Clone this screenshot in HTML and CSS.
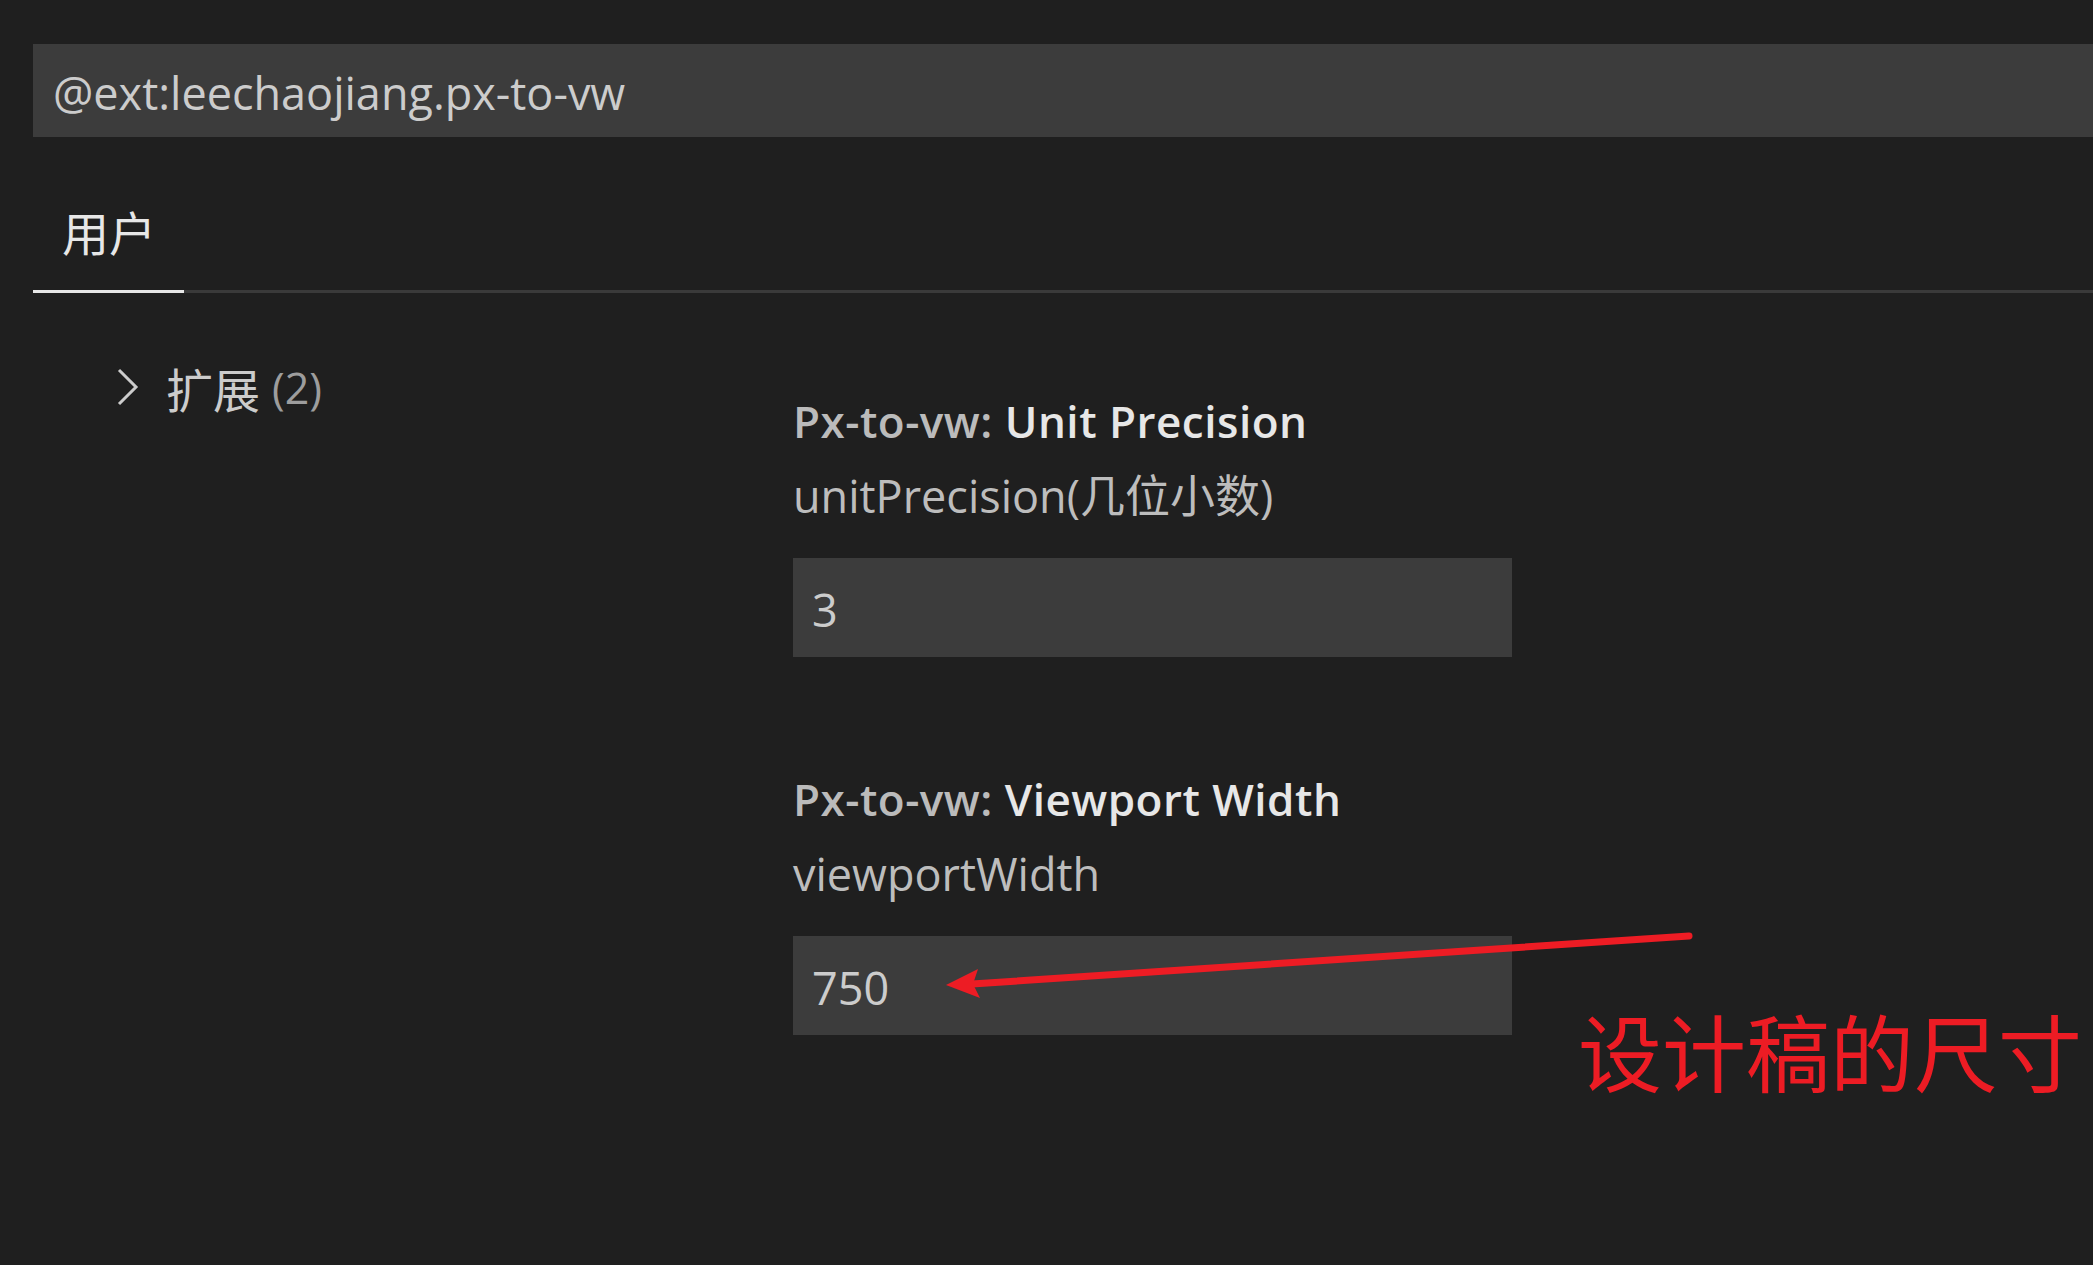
FILE: index.html
```html
<!DOCTYPE html>
<html lang="zh-CN">
<head>
<meta charset="utf-8">
<title>Settings</title>
<link rel="stylesheet" href="styles.css">
</head>
<body>
<div class="page">
  <div class="search">@ext:leechaojiang.px-to-vw</div>
  <div class="tabs">
    <div class="tab">用户</div>
  </div>
  <div class="content">
    <div class="toc">
      <div class="toc-item">
        <svg class="chev" width="22" height="38" viewBox="0 0 22 38"><polyline points="2,2 19,19 2,36" fill="none" stroke="#cccccc" stroke-width="3"/></svg>
        <span class="toc-label">扩展</span>
        <span class="toc-count">(2)</span>
      </div>
    </div>
    <div class="settings">
      <div class="setting">
        <div class="title"><span class="cat">Px-to-vw: </span><span class="name">Unit Precision</span></div>
        <div class="desc">unitPrecision(几位小数)</div>
        <div class="input">3</div>
      </div>
      <div class="setting">
        <div class="title"><span class="cat">Px-to-vw: </span><span class="name">Viewport Width</span></div>
        <div class="desc">viewportWidth</div>
        <div class="input">750</div>
      </div>
    </div>
  </div>
  <svg class="annot" width="2093" height="1265" viewBox="0 0 2093 1265">
    <line x1="972" y1="984" x2="1689" y2="936" stroke="#ed1c24" stroke-width="7" stroke-linecap="round"/>
    <polygon points="946,985 978,969 973,984 980,998" fill="#ed1c24"/>
  </svg>
  <div class="note">设计稿的尺寸</div>
</div>
</body>
</html>
```
FILE: styles.css
```css
html, body {
  margin: 0;
  padding: 0;
  background: #1f1f1f;
}
body {
  font-family: "Segoe UI", "Open Sans", "Noto Sans CJK SC", sans-serif;
  color: #cccccc;
  overflow: hidden;
}
.page {
  position: relative;
  width: 2093px;
  height: 1265px;
  padding-top: 44px;
  box-sizing: border-box;
}
.search {
  margin-left: 33px;
  height: 93px;
  box-sizing: border-box;
  background: #3c3c3c;
  padding: 5px 0 0 20px;
  font-size: 45px;
  line-height: 88px;
  color: #cccccc;
}
.tabs {
  margin-left: 33px;
  display: flex;
  border-bottom: 3px solid #3a3a3a;
}
.tab {
  width: 151px;
  box-sizing: border-box;
  padding: 64px 0 29px 29px;
  font-family: "Noto Sans CJK SC", sans-serif;
  font-size: 47px;
  line-height: 60px;
  color: #e7e7e7;
  border-bottom: 3px solid #e7e7e7;
  margin-bottom: -3px;
}
.content {
  display: grid;
  grid-template-columns: 760px 1fr;
  margin-left: 33px;
}
.toc {
  padding-top: 64px;
  padding-left: 84px;
}
.toc-item {
  display: flex;
  align-items: center;
  height: 60px;
}
.chev {
  margin-right: 27px;
}
.toc-label {
  font-family: "Noto Sans CJK SC", sans-serif;
  font-size: 47px;
  color: #cccccc;
  margin-right: 12px;
}
.toc-count {
  font-size: 43px;
  color: #9d9d9d;
}
.settings {
  padding-top: 98px;
  display: flex;
  flex-direction: column;
  gap: 112px;
}
.title {
  font-size: 44px;
  line-height: 60px;
  font-weight: 600;
  letter-spacing: 0.5px;
}
.cat {
  color: #bbbbbb;
}
.name {
  color: #e7e7e7;
}
.desc {
  margin-top: 15px;
  font-size: 45px;
  line-height: 60px;
  color: #bdbdbd;
}
.input {
  margin-top: 32px;
  width: 719px;
  height: 99px;
  box-sizing: border-box;
  background: #3c3c3c;
  padding: 5px 0 0 19px;
  font-size: 45px;
  line-height: 94px;
  color: #cccccc;
}
.annot {
  position: absolute;
  left: 0;
  top: 0;
  pointer-events: none;
}
.note {
  position: absolute;
  left: 1578px;
  top: 1003px;
  font-family: serif;
  font-size: 84px;
  line-height: 110px;
  color: #ed1c24;
  white-space: nowrap;
}
```
